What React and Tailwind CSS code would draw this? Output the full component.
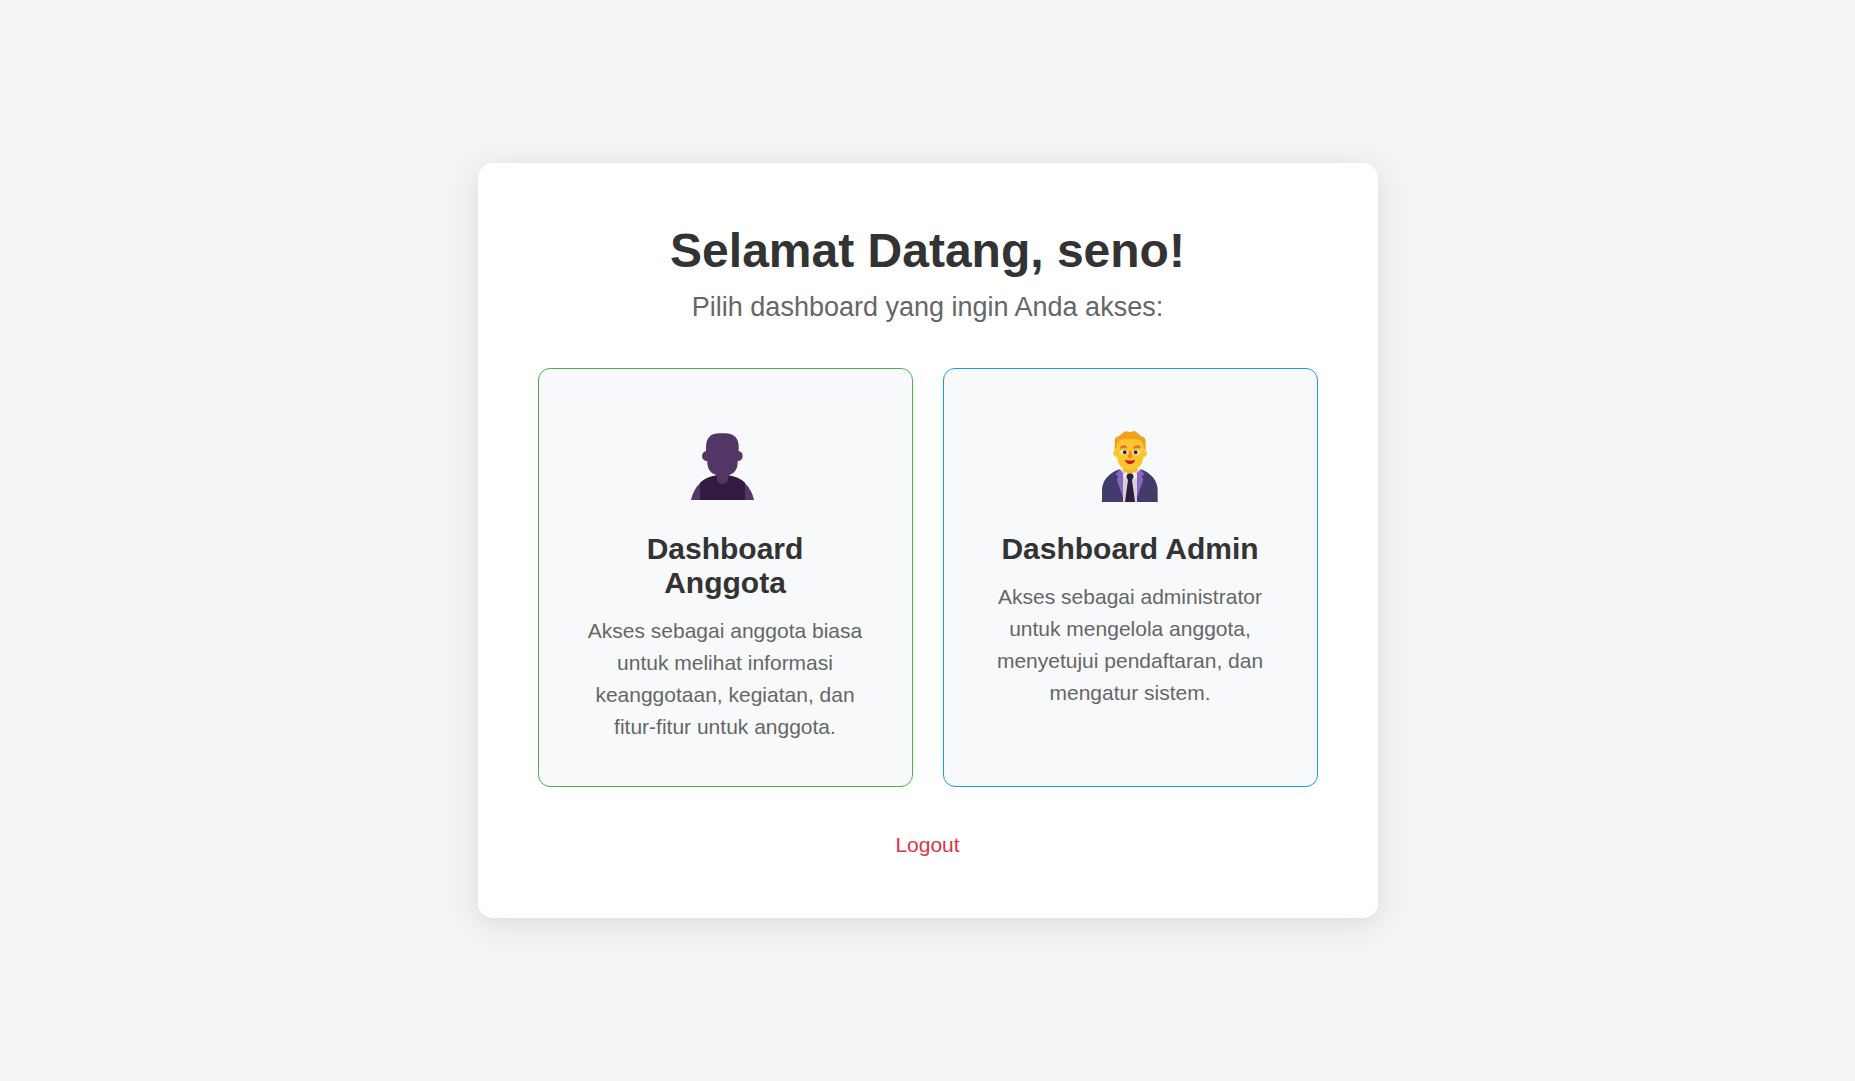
function MemberIcon() {
  return (
    <svg viewBox="-6 -18 288 288" className="size-24" aria-hidden="true">
      <path
        d="M36 240C45 198 72 174 110 167H150C189 174 216 198 225 240Z"
        fill="#533566"
      />
      <path d="M63 240V188Q84 170 112 166H148Q178 170 198 188V240Z" fill="#321B41" />
      <path d="M114 160H147V176Q146 192 130 192Q114 191 114 176Z" fill="#533566" />
      <path
        d="M81 93V80Q82 40 122 40H139Q178 41 179 80V93Q191 96 191 109Q190 122 176 124V131Q172 168 131 168Q88 166 85 131V124Q70 122 69 109Q70 96 81 93Z"
        fill="#533566"
      />
    </svg>
  );
}

function AdminIcon() {
  return (
    <svg viewBox="-6 -18 288 288" className="size-24" aria-hidden="true">
      <path d="M111 149H164L160 246H117Z" fill="#D3D3D3" />
      <path d="M126 152L138 160L151 152L163 172L145 178L138 168L131 178L117 170Z" fill="#F3F3F6" />
      <path d="M130 162L138 159L146 162L149 171L144 180L153 246H123L132 180L127 171Z" fill="#321B41" />
      <path
        d="M107 148C73 159 54 184 54 211V246H117V165ZM170 148C203 159 221 184 221 211V246H159V165Z"
        fill="#433B6B"
      />
      <path
        d="M108 148L95 163L103 169L98 179L117 232V160ZM169 148L181 163L173 169L178 179L159 232V160Z"
        fill="#8D65C5"
      />
      <path d="M116 138H161V149Q151 160 138 160Q125 160 116 149Z" fill="#F9B62C" />
      <path
        d="M98 52H179V90Q188 90 189 100Q188 110 178 112C177 136 162 150 138 150C115 150 101 136 99 112Q88 110 87 100Q88 90 98 90Z"
        fill="#FFC62F"
      />
      <path
        d="M92 91V60Q93 51 105 48L121 35Q127 32 133 35Q139 37 145 35Q151 31 157 36L172 49Q184 52 185 62V91Q178 90 178 82V76Q175 60 160 58H118Q102 60 99 76V82Q99 90 92 91Z"
        fill="#F3A01F"
      />
      <path
        d="M108 84Q109 75 119 75Q128 75 130 83Q128 87 121 84Q114 84 109 87ZM147 83Q150 75 159 75Q169 75 170 84Q169 88 164 85Q154 84 150 87Z"
        fill="#D67D35"
      />
      <path
        d="M109 97Q112 90 121 90Q131 91 133 98Q129 104 121 104Q111 103 109 97ZM144 98Q147 90 156 90Q166 90 168 97Q165 103 156 104Q147 103 144 98Z"
        fill="#FFF"
      />
      <circle cx="122" cy="97" r="6" fill="#402A32" />
      <circle cx="155" cy="97" r="6" fill="#402A32" />
      <path d="M137 92H141L145 109Q145 115 139 115Q131 115 132 109Z" fill="#F58A1F" />
      <path d="M123 119Q138 124 153 119Q151 132 138 132Q126 132 123 119Z" fill="#BB1D2D" />
    </svg>
  );
}

const dashboards = [
  {
    title: "Dashboard Anggota",
    text: "Akses sebagai anggota biasa untuk melihat informasi keanggotaan, kegiatan, dan fitur-fitur untuk anggota.",
    Icon: MemberIcon,
    border: "border-[#4caf50]",
  },
  {
    title: "Dashboard Admin",
    text: "Akses sebagai administrator untuk mengelola anggota, menyetujui pendaftaran, dan mengatur sistem.",
    Icon: AdminIcon,
    border: "border-[#2196f3]",
  },
];

export default function App() {
  return (
    <div className="flex min-h-screen items-center justify-center bg-[#f4f4f4] font-['Liberation_Sans',Arial,sans-serif]">
      <main className="w-full max-w-[900px] rounded-[15px] bg-white p-[60px] text-center shadow-[0_6px_30px_rgba(0,0,0,0.1)]">
        <h1 className="text-[48px] leading-[55px] font-bold text-[#333]">Selamat Datang, seno!</h1>
        <p className="mt-3.5 text-[27px] leading-[31px] text-[#666]">Pilih dashboard yang ingin Anda akses:</p>
        <div className="mt-[45px] grid grid-cols-1 gap-[30px] md:grid-cols-2">
          {dashboards.map(({ title, text, Icon, border }) => (
            <a
              key={title}
              href="#"
              className={`flex flex-col items-center rounded-xl border bg-[#f8f9fb] px-[45px] pt-[45px] pb-[43px] ${border}`}
            >
              <Icon />
              <h2 className="mt-[22px] text-[30px] leading-[34px] font-bold text-[#333]">{title}</h2>
              <p className="mt-[15px] text-[21px] leading-[32px] text-[#666]">{text}</p>
            </a>
          ))}
        </div>
        <div className="mt-[45px] text-[21px] leading-[26px]">
          <a href="#" className="text-[#dc3545]">
            Logout
          </a>
        </div>
      </main>
    </div>
  );
}
